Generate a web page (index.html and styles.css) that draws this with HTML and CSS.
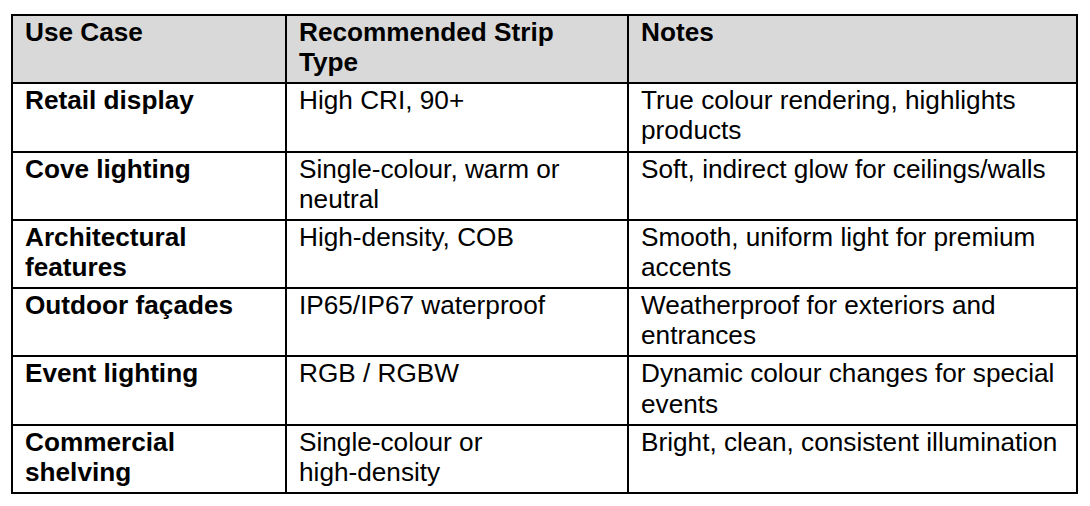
FILE: index.html
```html
<!DOCTYPE html>
<html lang="en">
<head>
<meta charset="utf-8">
<title>LED Strip Use Cases</title>
<link rel="stylesheet" href="styles.css">
</head>
<body>
<table class="strip-table">
  <colgroup>
    <col class="col-use">
    <col class="col-type">
    <col class="col-notes">
  </colgroup>
  <thead>
    <tr>
      <th>Use Case</th>
      <th>Recommended Strip Type</th>
      <th>Notes</th>
    </tr>
  </thead>
  <tbody>
    <tr>
      <td class="use">Retail display</td>
      <td>High CRI, 90+</td>
      <td>True colour rendering, highlights products</td>
    </tr>
    <tr>
      <td class="use">Cove lighting</td>
      <td>Single-colour, warm or neutral</td>
      <td>Soft, indirect glow for ceilings/walls</td>
    </tr>
    <tr>
      <td class="use">Architectural features</td>
      <td>High-density, COB</td>
      <td>Smooth, uniform light for premium accents</td>
    </tr>
    <tr>
      <td class="use">Outdoor façades</td>
      <td>IP65/IP67 waterproof</td>
      <td>Weatherproof for exteriors and entrances</td>
    </tr>
    <tr>
      <td class="use">Event lighting</td>
      <td>RGB / RGBW</td>
      <td>Dynamic colour changes for special events</td>
    </tr>
    <tr>
      <td class="use">Commercial shelving</td>
      <td>Single-colour or <span class="nowrap">high-density</span></td>
      <td>Bright, clean, consistent illumination</td>
    </tr>
  </tbody>
</table>
</body>
</html>
```

FILE: styles.css
```css
html, body {
  margin: 0;
  padding: 0;
  background: #ffffff;
}

body {
  padding: 14px 0 0 11px;
  font-family: "Liberation Sans", Arial, sans-serif;
  font-size: 26.2px;
  color: #000000;
}

.strip-table {
  border-collapse: collapse;
  table-layout: fixed;
  width: 1067px;
}

.col-use { width: 274px; }
.col-type { width: 342px; }
.col-notes { width: 449px; }

.strip-table th,
.strip-table td {
  border: 2px solid #000000;
  padding: 1px 12px 5.1px 12px;
  height: 60.2px;
  line-height: 30.1px;
  text-align: left;
  vertical-align: top;
  box-sizing: content-box;
}

.strip-table th {
  background: #d9d9d9;
  font-weight: bold;
}

.strip-table td.use {
  font-weight: bold;
}

.nowrap {
  white-space: nowrap;
}
```
